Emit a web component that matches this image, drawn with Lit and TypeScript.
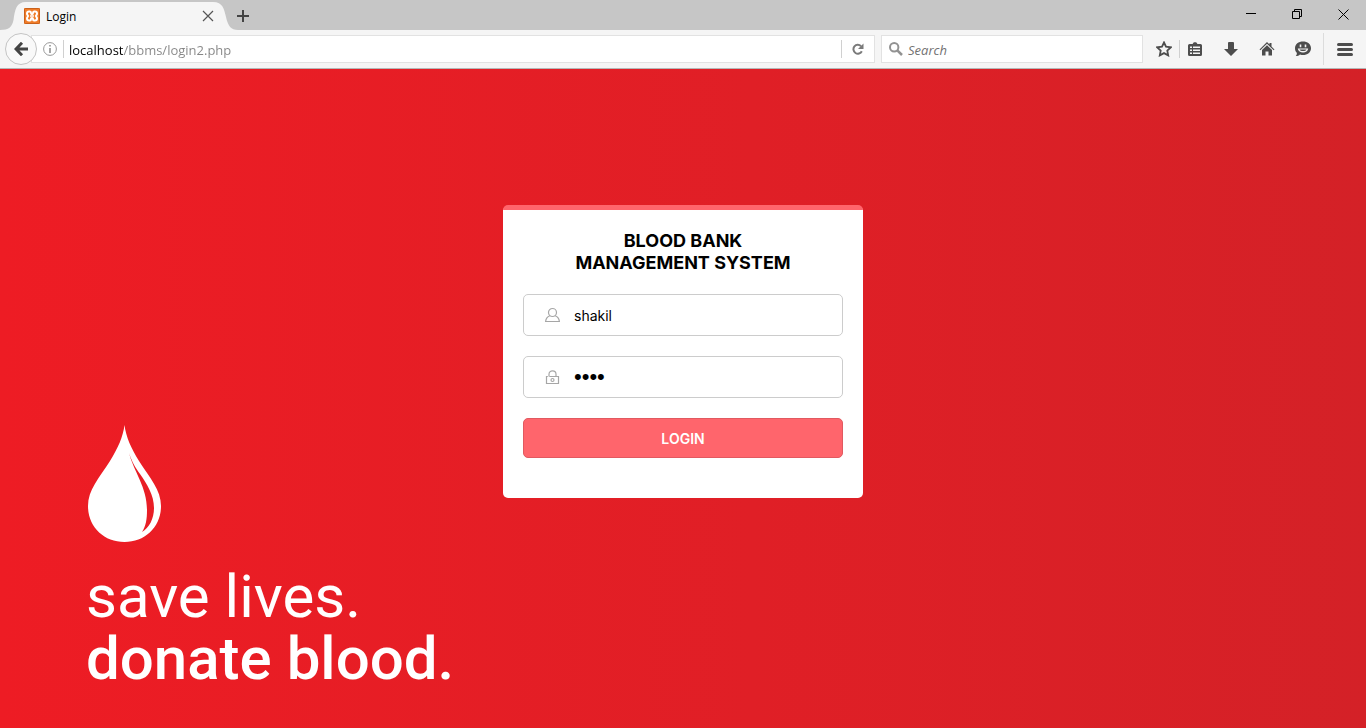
import { LitElement, html, css } from "lit";
import { customElement } from "lit/decorators.js";

@customElement("browser-chrome")
class BrowserChrome extends LitElement {
  static styles = css`
    :host {
      display: block;
      font-family: "Open Sans", "Noto Sans", sans-serif;
      color: #000;
    }
    button {
      display: flex;
      align-items: center;
      justify-content: center;
      flex: none;
      padding: 0;
      border: 0;
      background: none;
      color: #4d4d4d;
    }
    svg { display: block; flex: none; }
    input {
      flex: 1;
      min-width: 0;
      height: 26px;
      padding: 2px 0 0;
      box-sizing: border-box;
      border: 0;
      outline: 0;
      background: none;
      font: inherit;
      font-size: 13px;
    }
    .tabs {
      display: flex;
      height: 30px;
      background: #c6c6c6;
    }
    .tab {
      position: relative;
      display: flex;
      align-items: center;
      box-sizing: border-box;
      width: 238px;
      padding: 2px 22px 0 24px;
      font-size: 12px;
    }
    .tab-shape {
      position: absolute;
      inset: 0;
      z-index: 0;
    }
    .favicon, .tab-title, .tab-close { position: relative; }
    .tab-title { flex: 1; margin-left: 6px; }
    .tab-close { width: 16px; height: 16px; }
    .new-tab { width: 10px; height: 32px; overflow: visible; }
    .window-controls { display: flex; margin-left: auto; }
    .window-controls button { width: 46px; height: 28px; color: #000; }
    .toolbar {
      display: flex;
      align-items: center;
      box-sizing: border-box;
      height: 39px;
      padding-left: 5px;
      background: #f5f5f5;
      border-bottom: 1px solid #b6b6b6;
    }
    .back {
      position: relative;
      box-sizing: border-box;
      width: 32px;
      height: 32px;
      border: 1px solid #c4c4c4;
      border-radius: 50%;
      background: #f9f9f9;
    }
    .field {
      display: flex;
      align-items: center;
      box-sizing: border-box;
      height: 28px;
      border: 1px solid #e2e2e2;
      background: #fff;
    }
    .address { flex: 1; margin-left: -6px; padding-left: 11px; }
    .rule { flex: none; width: 1px; height: 18px; background: #d0d0d0; }
    .info { width: 14px; margin-right: 6px; color: #8a8a8a; }
    .url {
      margin-left: 5px;
      background: linear-gradient(90deg, #000 54px, #858585 54px);
      -webkit-background-clip: text;
      background-clip: text;
      color: transparent;
    }
    .reload { width: 32px; height: 26px; color: #7a7a7a; }
    .search { width: 262px; margin: 0 6px; padding-left: 7px; }
    .search input { margin-left: 5px; font-style: italic; }
    .search input::placeholder { color: #727272; opacity: 1; }
    .star, .library { width: 30px; height: 32px; }
    .library { margin-right: 3px; }
    .tool { width: 36px; height: 32px; }
    .menu {
      width: 43px;
      height: 32px;
      margin-left: 2px;
      border-left: 1px solid #dcdcdc;
    }
  `;

  render() {
    return html`
      <div class="tabs">
        <div class="tab">
          <svg class="tab-shape" width="238" height="30" viewBox="0 0 238 30">
            <path fill="#f5f5f5" d="M0 30C9 30 12 27 13.500 20C15 10 16 2 26 2H213C223 2 224 9 226 17C228 26 231 30 238 30Z" />
          </svg>
          <svg class="favicon" width="16" height="16" viewBox="0 0 16 16">
            <rect width="16" height="16" rx="1" fill="#f07c28" />
            <rect x=".5" y=".5" width="15" height="15" rx="1" fill="none" stroke="#c9611c" />
            <path fill="none" stroke="#fff" stroke-width="2" stroke-linejoin="round"
              d="M5 3.500H6C7 3.500 7 4.500 7 5C7 6.500 9 6.500 9 5C9 4.500 9 3.500 10 3.500H11C12.500 3.500 13 4.500 13 5.500C13 7 12 7 12 8C12 9 13 9 13 10.500C13 11.500 12.500 12.500 11 12.500H10C9 12.500 9 11.500 9 11C9 9.500 7 9.500 7 11C7 11.500 7 12.500 6 12.500H5C3.500 12.500 3 11.500 3 10.500C3 9 4 9 4 8C4 7 3 7 3 5.500C3 4.500 3.500 3.500 5 3.500Z" />
            <path stroke="#fff" stroke-width="1.500" d="M6 8H10" />
          </svg>
          <span class="tab-title">Login</span>
          <button class="tab-close" aria-label="Close tab">
            <svg width="12" height="12" viewBox="0 0 12 12"><path d="M1 1L11 11M11 1L1 11" stroke="#555" stroke-width="1.200" /></svg>
          </button>
        </div>
        <button class="new-tab" aria-label="New tab">
          <svg width="12" height="12" viewBox="0 0 12 12"><path d="M6 0V12M0 6H12" stroke="#444" stroke-width="2" /></svg>
        </button>
        <div class="window-controls">
          <button aria-label="Minimize"><svg width="10" height="10" viewBox="0 0 10 10"><path d="M0 4.500H10" stroke="currentColor" /></svg></button>
          <button aria-label="Restore"><svg width="10" height="10" viewBox="0 0 10 10" fill="none" stroke="currentColor"><path d="M.5 2.500H7.500V9.500H.5ZM2.500 2.500V.5H9.500V7.500H7.500" /></svg></button>
          <button aria-label="Close"><svg width="11" height="11" viewBox="0 0 11 11"><path d="M.5 .5L10.500 10.500M10.500 .5L.5 10.500" stroke="currentColor" /></svg></button>
        </div>
      </div>
      <div class="toolbar">
        <button class="back" aria-label="Back">
          <svg width="14" height="14" viewBox="0 0 14 14" fill="none" stroke="#444" stroke-width="3"><path d="M8 .8L2 7L8 13.200M2 7H14" /></svg>
        </button>
        <div class="field address">
          <button class="info" aria-label="Site information">
            <svg width="14" height="14" viewBox="0 0 14 14"><circle cx="7" cy="7" r="6.400" fill="none" stroke="#999" /><path d="M7 3V4.600M7 6V11" stroke="#888" stroke-width="1.500" /></svg>
          </button>
          <span class="rule"></span>
          <input class="url" type="text" aria-label="Address" .value=${"localhost/bbms/login2.php"} />
          <span class="rule"></span>
          <button class="reload" aria-label="Reload">
            <svg width="12" height="12" viewBox="0 0 12 12"><path d="M9 3.200A4.400 4.400 0 1 0 9.800 8.200" fill="none" stroke="currentColor" stroke-width="2" /><path d="M11.500 .5V6H6Z" fill="currentColor" /></svg>
          </button>
        </div>
        <div class="field search">
          <svg width="14" height="14" viewBox="0 0 14 14" fill="none" stroke="#929292"><circle cx="5.200" cy="5.200" r="4.200" stroke-width="2" /><path d="M8.300 8.300L13 13" stroke-width="2.500" /></svg>
          <input type="text" aria-label="Search" placeholder="Search" />
        </div>
        <button class="star" aria-label="Bookmark this page">
          <svg width="16" height="16" viewBox="0 0 16 16"><path d="M8 1.500L10 5.700L14.800 6.300L11.300 9.600L12.200 14.400L8 12.100L3.800 14.400L4.700 9.600L1.200 6.300L6 5.700Z" fill="none" stroke="currentColor" stroke-width="1.800" /></svg>
        </button>
        <span class="rule"></span>
        <button class="library" aria-label="Bookmarks">
          <svg width="14" height="16" viewBox="0 0 14 16"><path fill="currentColor" fill-rule="evenodd" d="M5 2.500C5 .8 9 .8 9 2.500L9.500 3H12.500Q14 3 14 4.500V13.500Q14 15 12.500 15H1.500Q0 15 0 13.500V4.500Q0 3 1.500 3H4.500ZM2 5.500V7H4V5.500ZM5 5.500V7H12V5.500ZM2 8.500V10H4V8.500ZM5 8.500V10H12V8.500ZM2 11.500V13H4V11.500ZM5 11.500V13H12V11.500Z" /></svg>
        </button>
        <button class="tool" aria-label="Downloads">
          <svg width="14" height="14" viewBox="0 0 14 14"><path fill="currentColor" d="M4 1Q4 0 5 0H9Q10 0 10 1V7H14L7 14L0 7H4Z" /></svg>
        </button>
        <button class="tool" aria-label="Home">
          <svg width="16" height="16" viewBox="0 0 16 16" fill="currentColor"><path d="M8 1L10.500 3.500V2H12.500V5.500L15.500 8.500L14.700 9.300L8 2.800L1.300 9.300L.5 8.500Z" /><path d="M8 4.200L13 9V14.500H9.500V10.500H6.500V14.500H3V9Z" /></svg>
        </button>
        <button class="tool" aria-label="Start a conversation">
          <svg width="16" height="16" viewBox="0 0 16 16"><path fill="currentColor" d="M8 .5C12.500 .5 16 3.200 16 7.200C16 11.200 12.500 14 8 14C7 14 6 13.900 5 13.500C4 14.700 2.500 15 .8 15C1.700 14 2 13 1.800 11.800C.7 10.700 0 9.200 0 7.200C0 3.200 3.500 .5 8 .5Z" /><path d="M5.500 3.500V6.200M10.500 3.500V6.200" stroke="#f5f5f5" stroke-width="1.600" /><path d="M2.800 7.500H13.200C12.700 12.700 3.300 12.700 2.800 7.500Z" fill="#f5f5f5" /><path d="M4.500 8.500H11.500C10.700 10.500 5.300 10.500 4.500 8.500Z" fill="currentColor" /></svg>
        </button>
        <button class="menu" aria-label="Open menu">
          <svg width="16" height="13" viewBox="0 0 16 13"><path d="M1.500 1.500H14.500M1.500 6.500H14.500M1.500 11.500H14.500" stroke="currentColor" stroke-width="3" stroke-linecap="round" /></svg>
        </button>
      </div>
    `;
  }
}

@customElement("login-card")
class LoginCard extends LitElement {
  static styles = css`
    :host {
      display: block;
      font-family: Inter, "Liberation Sans", sans-serif;
    }
    .card {
      display: flex;
      flex-direction: column;
      gap: 20px;
      padding: 20px 20px 40px;
      border-top: 5px solid #ff656c;
      border-radius: 5px;
      background: #fff;
    }
    h1 {
      margin: 0;
      font-size: 18px;
      line-height: 22px;
      font-weight: 700;
      text-align: center;
      color: #000;
    }
    .line { display: block; }
    label {
      display: flex;
      align-items: center;
      box-sizing: border-box;
      height: 42px;
      padding-left: 20px;
      border: 1px solid #ccc;
      border-radius: 5px;
    }
    svg { display: block; flex: none; }
    input {
      flex: 1;
      min-width: 0;
      height: 40px;
      padding: 0 14px;
      border: 0;
      outline: 0;
      background: none;
      font: inherit;
      font-size: 14px;
      color: #000;
    }
    .password { font-family: "Liberation Sans", sans-serif; font-size: 22px; }
    button {
      height: 40px;
      padding: 0;
      border: 1px solid #e15960;
      border-radius: 5px;
      background: #ff656c;
      color: #fff;
      font: inherit;
      font-size: 14px;
      font-weight: 600;
    }
  `;

  render() {
    return html`
      <form class="card" @submit=${(e: Event) => e.preventDefault()}>
        <h1><span class="line">BLOOD BANK</span><span class="line">MANAGEMENT SYSTEM</span></h1>
        <label>
          <svg width="16" height="16" viewBox="0 0 16 16" fill="none" stroke="#a6a6a6" stroke-width="1.200"><circle cx="8.500" cy="5.500" r="4" /><path d="M5.800 8.800C3.300 9.800 1.900 12 1.600 14.500H15.400C15.100 12 13.700 9.800 11.200 8.800" /></svg>
          <input type="text" aria-label="Username" autocomplete="off" .value=${"shakil"} />
        </label>
        <label>
          <svg width="16" height="16" viewBox="0 0 16 16" fill="none" stroke="#a6a6a6" stroke-width="1.200"><path d="M5 7.500V5.300C5 .7 12 .7 12 5.300V7.500M5.500 7.500H14.500V14.500H2.500V7.500H3.800" /><circle cx="8.500" cy="11" r="1.500" /></svg>
          <input class="password" type="password" aria-label="Password" autocomplete="off" .value=${"pass"} />
        </label>
        <button type="submit">LOGIN</button>
      </form>
    `;
  }
}

@customElement("app-root")
class AppRoot extends LitElement {
  static styles = css`
    :host {
      display: flex;
      flex-direction: column;
      min-height: 100vh;
    }
    main {
      flex: 1;
      display: grid;
      grid-template-columns: 1fr 360px 1fr;
      background: linear-gradient(90deg, #ee1c24, #e01f26 55%, #d42127);
    }
    login-card { grid-column: 2; grid-row: 1; align-self: start; margin: 136px 0 40px; }
    .brand {
      grid-column: 1;
      grid-row: 1;
      align-self: end;
      padding: 0 0 38px 86px;
      color: #fff;
      font-family: Roboto, "Open Sans", sans-serif;
      white-space: nowrap;
    }
    .drop { display: block; margin: 0 0 23px 2px; }
    .slogan { margin: 0; font-size: 60px; line-height: 62px; font-weight: 400; }
    .slogan strong { display: block; font-weight: 500; }
  `;

  render() {
    return html`
      <browser-chrome></browser-chrome>
      <main>
        <section class="brand">
          <svg class="drop" width="74" height="118" viewBox="0 0 74 118">
            <path fill="#fff" d="M36.500 0C38 12 43 23 51 36C62 53 73 65 73 81C73 102 57 117 36.500 117C16 117 0 102 0 81C0 65 11 53 22 36C30 23 35 12 36.500 0Z" />
            <path fill="#e91d25" d="M41 28C44 37 47 42 52 49C59 59 66 70 66 83C66 94 61 103 54 107C58 101 59 94 59 85C59 62 46 47 41 28Z" />
          </svg>
          <p class="slogan">save lives.<strong>donate blood.</strong></p>
        </section>
        <login-card></login-card>
      </main>
    `;
  }
}
